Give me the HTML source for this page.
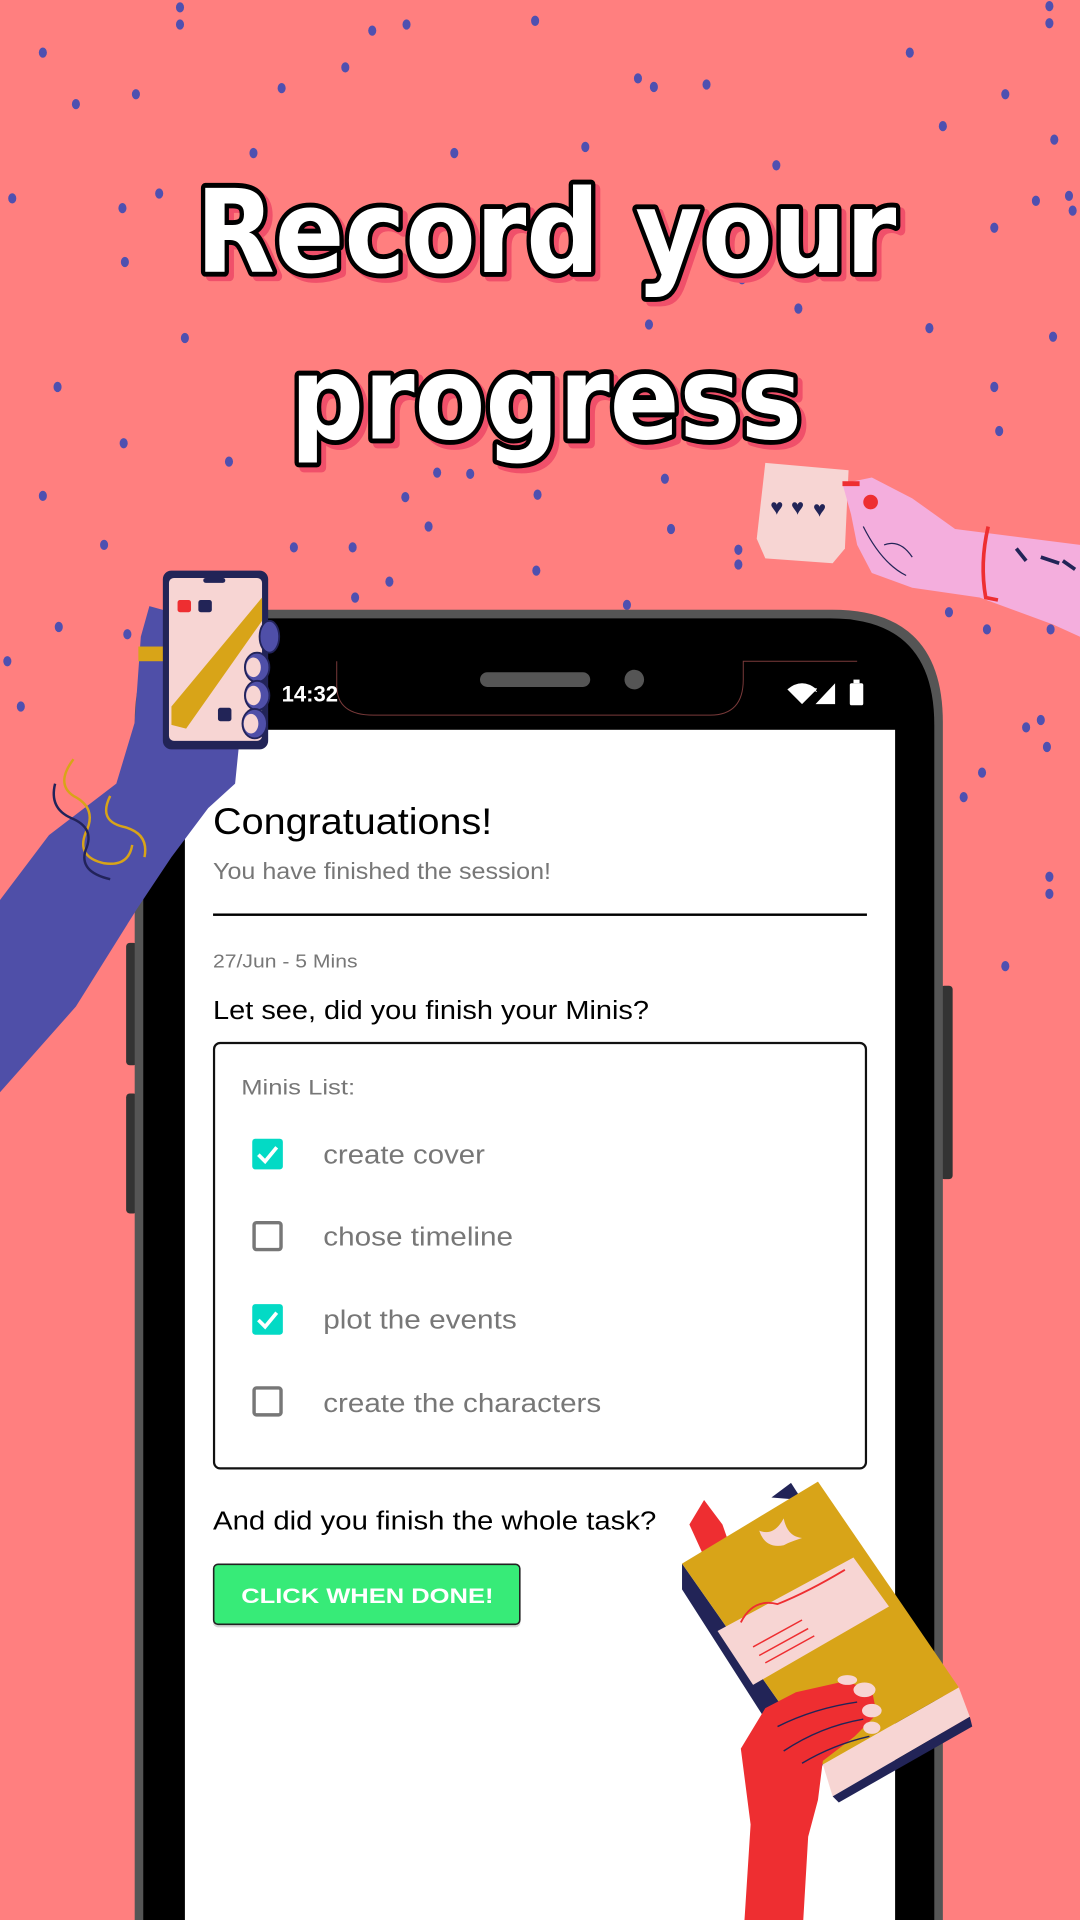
<!DOCTYPE html>
<html><head><meta charset="utf-8"><style>
html,body{margin:0;padding:0;background:#FF7F7F;}
svg{display:block;}
</style></head><body>
<svg width="1080" height="1920" viewBox="0 0 882 1568" xmlns="http://www.w3.org/2000/svg" font-family="Liberation Sans, DejaVu Sans, sans-serif">
<rect width="882" height="1568" fill="#FF7F7F"/>
<g fill="#4F50B0">
<ellipse cx="147" cy="6" rx="3.3" ry="4.2"/><ellipse cx="147" cy="20" rx="3.3" ry="4.2"/><ellipse cx="437" cy="17" rx="3.3" ry="4.2"/><ellipse cx="857" cy="5" rx="3.3" ry="4.2"/><ellipse cx="857" cy="19" rx="3.3" ry="4.2"/><ellipse cx="35" cy="43" rx="3.3" ry="4.2"/><ellipse cx="332" cy="20" rx="3.3" ry="4.2"/><ellipse cx="304" cy="25" rx="3.3" ry="4.2"/><ellipse cx="111" cy="77" rx="3.3" ry="4.2"/><ellipse cx="230" cy="72" rx="3.3" ry="4.2"/><ellipse cx="282" cy="55" rx="3.3" ry="4.2"/><ellipse cx="521" cy="64" rx="3.3" ry="4.2"/><ellipse cx="534" cy="71" rx="3.3" ry="4.2"/><ellipse cx="577" cy="69" rx="3.3" ry="4.2"/><ellipse cx="743" cy="43" rx="3.3" ry="4.2"/><ellipse cx="821" cy="77" rx="3.3" ry="4.2"/><ellipse cx="62" cy="85" rx="3.3" ry="4.2"/><ellipse cx="770" cy="103" rx="3.3" ry="4.2"/><ellipse cx="861" cy="114" rx="3.3" ry="4.2"/><ellipse cx="10" cy="162" rx="3.3" ry="4.2"/><ellipse cx="207" cy="125" rx="3.3" ry="4.2"/><ellipse cx="371" cy="125" rx="3.3" ry="4.2"/><ellipse cx="478" cy="120" rx="3.3" ry="4.2"/><ellipse cx="634" cy="135" rx="3.3" ry="4.2"/><ellipse cx="100" cy="170" rx="3.3" ry="4.2"/><ellipse cx="130" cy="158" rx="3.3" ry="4.2"/><ellipse cx="846" cy="164" rx="3.3" ry="4.2"/><ellipse cx="873" cy="160" rx="3.3" ry="4.2"/><ellipse cx="876" cy="172" rx="3.3" ry="4.2"/><ellipse cx="102" cy="214" rx="3.3" ry="4.2"/><ellipse cx="606" cy="228" rx="3.3" ry="4.2"/><ellipse cx="812" cy="186" rx="3.3" ry="4.2"/><ellipse cx="652" cy="252" rx="3.3" ry="4.2"/><ellipse cx="759" cy="268" rx="3.3" ry="4.2"/><ellipse cx="151" cy="276" rx="3.3" ry="4.2"/><ellipse cx="530" cy="265" rx="3.3" ry="4.2"/><ellipse cx="860" cy="275" rx="3.3" ry="4.2"/><ellipse cx="47" cy="316" rx="3.3" ry="4.2"/><ellipse cx="812" cy="316" rx="3.3" ry="4.2"/><ellipse cx="101" cy="362" rx="3.3" ry="4.2"/><ellipse cx="187" cy="377" rx="3.3" ry="4.2"/><ellipse cx="816" cy="352" rx="3.3" ry="4.2"/><ellipse cx="357" cy="386" rx="3.3" ry="4.2"/><ellipse cx="384" cy="387" rx="3.3" ry="4.2"/><ellipse cx="331" cy="406" rx="3.3" ry="4.2"/><ellipse cx="543" cy="391" rx="3.3" ry="4.2"/><ellipse cx="439" cy="404" rx="3.3" ry="4.2"/><ellipse cx="35" cy="405" rx="3.3" ry="4.2"/><ellipse cx="350" cy="430" rx="3.3" ry="4.2"/><ellipse cx="548" cy="432" rx="3.3" ry="4.2"/><ellipse cx="85" cy="445" rx="3.3" ry="4.2"/><ellipse cx="240" cy="447" rx="3.3" ry="4.2"/><ellipse cx="288" cy="447" rx="3.3" ry="4.2"/><ellipse cx="603" cy="449" rx="3.3" ry="4.2"/><ellipse cx="603" cy="461" rx="3.3" ry="4.2"/><ellipse cx="438" cy="466" rx="3.3" ry="4.2"/><ellipse cx="318" cy="475" rx="3.3" ry="4.2"/><ellipse cx="512" cy="494" rx="3.3" ry="4.2"/><ellipse cx="806" cy="514" rx="3.3" ry="4.2"/><ellipse cx="858" cy="514" rx="3.3" ry="4.2"/><ellipse cx="6" cy="540" rx="3.3" ry="4.2"/><ellipse cx="104" cy="518" rx="3.3" ry="4.2"/><ellipse cx="290" cy="488" rx="3.3" ry="4.2"/><ellipse cx="850" cy="588" rx="3.3" ry="4.2"/><ellipse cx="838" cy="594" rx="3.3" ry="4.2"/><ellipse cx="802" cy="631" rx="3.3" ry="4.2"/><ellipse cx="855" cy="610" rx="3.3" ry="4.2"/><ellipse cx="787" cy="651" rx="3.3" ry="4.2"/><ellipse cx="857" cy="716" rx="3.3" ry="4.2"/><ellipse cx="857" cy="730" rx="3.3" ry="4.2"/><ellipse cx="821" cy="789" rx="3.3" ry="4.2"/><ellipse cx="775" cy="500" rx="3.3" ry="4.2"/><ellipse cx="17" cy="577" rx="3.3" ry="4.2"/><ellipse cx="48" cy="512" rx="3.3" ry="4.2"/>
</g>

<!-- title -->
<g font-family="DejaVu Sans, sans-serif" font-weight="bold" font-size="94" text-anchor="middle" stroke-linejoin="round">
<text x="450" y="226" textLength="572" lengthAdjust="spacingAndGlyphs" fill="#F0506A" stroke="#F0506A" stroke-width="8">Record your</text>
<text x="446" y="222" textLength="572" lengthAdjust="spacingAndGlyphs" fill="#fff" stroke="#000" stroke-width="8" paint-order="stroke">Record your</text>
<text x="450" y="362" textLength="418" lengthAdjust="spacingAndGlyphs" fill="#F0506A" stroke="#F0506A" stroke-width="8">progress</text>
<text x="446" y="358" textLength="418" lengthAdjust="spacingAndGlyphs" fill="#fff" stroke="#000" stroke-width="8" paint-order="stroke">progress</text>
</g>

<!-- phone -->
<rect x="103" y="770" width="9" height="100" rx="3" fill="#333"/>
<rect x="103" y="893" width="9" height="98" rx="3" fill="#333"/>
<rect x="768" y="805" width="10" height="158" rx="3" fill="#333"/>
<path d="M110 1568 V590 Q110 498 200 498 H680 Q770 498 770 590 V1568 Z" fill="#555"/>
<path d="M117 1568 V592 Q117 505 202 505 H678 Q763 505 763 592 V1568 Z" fill="#000"/>
<rect x="151" y="596" width="580" height="972" fill="#fff"/>
<path d="M275 540 V560 Q275 584 305 584 H580 Q607 584 607 555 V540 H700" fill="none" stroke="#7a3a3a" stroke-width="0.8"/>
<rect x="392" y="549" width="90" height="12" rx="6" fill="#555"/>
<circle cx="518" cy="555" r="8" fill="#555"/>
<text x="230" y="573" fill="#fff" font-size="18" font-weight="bold">14:32</text>
<path d="M643 563 Q655 553 667 563 L655 575 Z" fill="#fff"/>
<path d="M666 575 L682 558 V575 Z" fill="#fff"/>
<text x="664" y="565" fill="#fff" font-size="6" font-weight="bold">x</text>
<rect x="694" y="558" width="11" height="18" rx="1.5" fill="#fff"/>
<rect x="697" y="555" width="5" height="3" fill="#fff"/>

<!-- content -->
<text x="174" y="681" font-size="30" fill="#000" textLength="228" lengthAdjust="spacingAndGlyphs">Congratuations!</text>
<text x="174" y="718" font-size="18.5" fill="#777" textLength="276" lengthAdjust="spacingAndGlyphs">You have finished the session!</text>
<rect x="174" y="746" width="534" height="2" fill="#000"/>
<text x="174" y="790" font-size="15" fill="#777" textLength="118" lengthAdjust="spacingAndGlyphs">27/Jun - 5 Mins</text>
<text x="174" y="832" font-size="21.5" fill="#000" textLength="356" lengthAdjust="spacingAndGlyphs">Let see, did you finish your Minis?</text>
<rect x="174.8" y="851.8" width="532.4" height="347.4" rx="5" fill="none" stroke="#111" stroke-width="1.8"/>
<text x="197" y="894" font-size="17.5" fill="#777" textLength="93" lengthAdjust="spacingAndGlyphs">Minis List:</text>
<g font-size="21" fill="#777">
<rect x="206" y="930" width="25" height="25" rx="2.5" fill="#03DAC5"/><path d="M211 943 L216.5 948.5 L226 937" fill="none" stroke="#fff" stroke-width="3"/>
<text x="264" y="950" textLength="132" lengthAdjust="spacingAndGlyphs">create cover</text>
<rect x="207.5" y="998.5" width="22" height="22" rx="2" fill="none" stroke="#777" stroke-width="2.8"/>
<text x="264" y="1017" textLength="155" lengthAdjust="spacingAndGlyphs">chose timeline</text>
<rect x="206" y="1065" width="25" height="25" rx="2.5" fill="#03DAC5"/><path d="M211 1078 L216.5 1083.5 L226 1072" fill="none" stroke="#fff" stroke-width="3"/>
<text x="264" y="1085" textLength="158" lengthAdjust="spacingAndGlyphs">plot the events</text>
<rect x="207.5" y="1133.5" width="22" height="22" rx="2" fill="none" stroke="#777" stroke-width="2.8"/>
<text x="264" y="1153" textLength="227" lengthAdjust="spacingAndGlyphs">create the characters</text>
</g>
<text x="174" y="1249" font-size="21.5" fill="#000" textLength="362" lengthAdjust="spacingAndGlyphs">And did you finish the whole task?</text>
<rect x="174" y="1279" width="251" height="50" rx="4" fill="#bbb" opacity="0.6"/>
<rect x="174.5" y="1277.5" width="250" height="49" rx="3.5" fill="#37EB78" stroke="#222" stroke-width="1.3"/>
<text x="197" y="1309" font-size="17" fill="#fff" font-weight="bold" textLength="206" lengthAdjust="spacingAndGlyphs">CLICK WHEN DONE!</text>

<!-- left arm -->
<path d="M0 735 L40 682 L95 640 L110 590 L115 520 L122 495 L140 500 L142 540 L196 600 L192 640 L170 660 L140 700 L112 742 L62 822 L0 892 Z" fill="#4F4FA8"/>
<path d="M60 620 Q45 640 60 650 Q80 660 70 680 Q62 700 85 705 Q105 708 108 690" fill="none" stroke="#D8A418" stroke-width="2"/>
<path d="M45 640 Q40 660 58 668 Q78 676 70 694 Q64 712 90 718" fill="none" stroke="#22235A" stroke-width="2"/>
<path d="M90 650 Q80 670 100 675 Q122 680 118 700" fill="none" stroke="#D8A418" stroke-width="2"/>
<rect x="113" y="528" width="30" height="12" fill="#D8A418"/>
<rect x="133" y="466" width="86" height="146" rx="7" fill="#222457"/>
<rect x="138" y="472" width="76" height="133" rx="4" fill="#F7D5D3"/>
<path d="M214 488 L214 507 L152 595 L140 592 L140 577 Z" fill="#D8A418"/>
<rect x="166" y="472" width="18" height="4" rx="2" fill="#222457"/>
<rect x="145" y="490" width="11" height="10" rx="2" fill="#EE2E31"/>
<rect x="162" y="490" width="11" height="10" rx="2" fill="#222457"/>
<rect x="178" y="578" width="11" height="11" rx="2" fill="#222457"/>
<g fill="#4F4FA8" stroke="#22235A" stroke-width="1.5">
<ellipse cx="220" cy="520" rx="8" ry="13"/>
<ellipse cx="210" cy="545" rx="10" ry="12"/><ellipse cx="210" cy="568" rx="10" ry="12"/><ellipse cx="208" cy="591" rx="10" ry="12"/>
</g>
<g fill="#F7D5D3"><ellipse cx="207" cy="545" rx="6" ry="8"/><ellipse cx="207" cy="568" rx="6" ry="8"/><ellipse cx="205" cy="591" rx="6" ry="8"/></g>

<!-- right arm -->
<path d="M625 378 L693 384 L690 448 L680 460 L625 456 L618 440 Z" fill="#F7D5D3"/>
<g fill="#222457" font-size="18"><text x="629" y="420">♥</text><text x="646" y="420">♥</text><text x="664" y="422">♥</text></g>
<path d="M688 395 L712 390 L745 407 L780 432 L882 445 L882 520 L860 510 L800 488 L745 480 L712 468 L700 445 L695 420 Z" fill="#F4AEDD"/>
<ellipse cx="711" cy="410" rx="6" ry="6" fill="#EE2E31"/>
<rect x="688" y="393" width="14" height="4" fill="#EE2E31"/>
<path d="M807 430 Q800 460 805 488 L815 490" fill="none" stroke="#EE2E31" stroke-width="3"/>
<path d="M830 448 L838 458 M850 455 L865 460 M868 458 L878 465" stroke="#222457" stroke-width="3" fill="none"/>
<path d="M705 430 Q720 460 740 470 M722 445 Q735 440 745 455" stroke="#222457" stroke-width="1" fill="none"/>

<!-- book -->
<path d="M563 1245 L575 1225 L590 1245 L598 1268 L578 1278 Z" fill="#EE2E31"/>
<path d="M630 1223 L646 1211 L655 1225 Z" fill="#222457"/>
<path d="M672 1441 L783 1378 L792 1402 L680 1467 Z" fill="#F7D5D3"/>
<path d="M680 1467 L792 1402 L794 1410 L685 1472 Z" fill="#222457"/>
<path d="M557 1277 L557 1298 L662 1462 L672 1441 Z" fill="#222457"/>
<path d="M557 1277 L668 1210 L783 1378 L672 1441 Z" fill="#D8A418"/>
<path d="M586 1332 L697 1272 L726 1312 L615 1376 Z" fill="#F7D5D3"/>
<path d="M640 1262 Q625 1265 620 1250 Q632 1255 640 1240 Q643 1255 655 1256 Q643 1260 640 1262Z" fill="#F7D5D3"/>
<path d="M605 1325 Q615 1305 635 1310 Q660 1300 690 1282" fill="none" stroke="#EE2E31" stroke-width="1.5"/>
<path d="M615 1345 L655 1323 M620 1352 L660 1330 M625 1358 L665 1336" stroke="#EE2E31" stroke-width="1.2"/>
<path d="M608 1568 L613 1490 L605 1428 L625 1395 L650 1382 L690 1373 L712 1380 L716 1400 L698 1418 L672 1438 L668 1470 L660 1500 L656 1568 Z" fill="#EE2E31"/>
<g fill="#F7D5D3"><ellipse cx="706" cy="1380" rx="9" ry="6"/><ellipse cx="712" cy="1397" rx="8" ry="5.5"/><ellipse cx="712" cy="1411" rx="7" ry="5"/><ellipse cx="692" cy="1372" rx="8" ry="4"/></g>
<path d="M635 1410 Q665 1395 700 1390 M640 1430 Q670 1410 705 1404 M655 1440 Q680 1425 710 1418" fill="none" stroke="#222457" stroke-width="1.2"/>
</svg>
</body></html>
